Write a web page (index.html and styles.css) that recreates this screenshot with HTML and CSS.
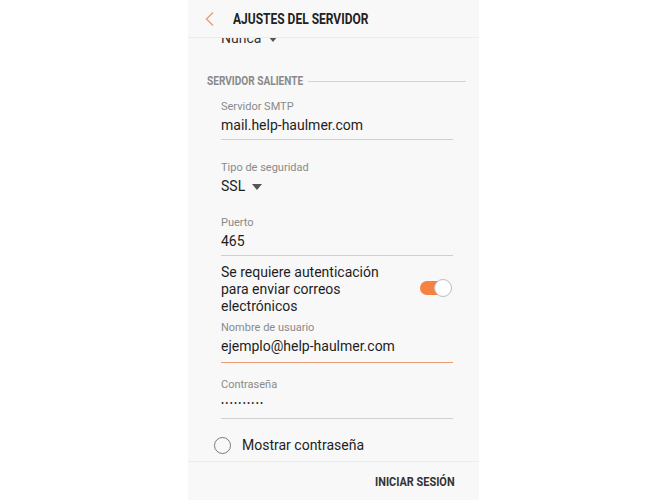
FILE: index.html
```html
<!DOCTYPE html>
<html lang="es">

<head>
  <meta charset="UTF-8" />
  <meta name="viewport" content="width=device-width, initial-scale=1" />
  <title>Ajustes del servidor</title>
  <link rel="stylesheet" href="styles.css">
</head>

<body>

  <div class="screen">
    <header class="topbar">
      <svg class="back" width="10" height="16" viewBox="0 0 10 16">
        <polyline points="8,1.5 1.5,8 8,14.5" fill="none" stroke="#e89c7c" stroke-width="1.4" />
      </svg>
      <span class="title narrow">AJUSTES DEL SERVIDOR</span>
    </header>

    <div class="content">
      <!-- fila anterior, cortada por el scroll -->
      <div class="dropdown cut">Nunca <span class="caret"></span></div>

      <div class="section">
        <span class="narrow">SERVIDOR SALIENTE</span>
        <span class="rule"></span>
      </div>

      <div class="field smtp">
        <div class="label">Servidor SMTP</div>
        <div class="value lined">mail.help-haulmer.com</div>
      </div>

      <div class="field seguridad">
        <div class="label">Tipo de seguridad</div>
        <div class="value">SSL <span class="caret"></span></div>
      </div>

      <div class="field puerto">
        <div class="label">Puerto</div>
        <div class="value lined">465</div>
      </div>

      <div class="auth">
        <span class="auth-text">Se requiere autenticación para enviar correos electrónicos</span>
        <span class="toggle"><span class="track"></span><span class="knob"></span></span>
      </div>

      <div class="field usuario">
        <div class="label">Nombre de usuario</div>
        <div class="value lined active">ejemplo@help-haulmer.com</div>
      </div>

      <div class="field clave">
        <div class="label">Contraseña</div>
        <div class="value lined dots">••••••••••</div>
      </div>

      <div class="check">
        <span class="radio"></span>
        <span>Mostrar contraseña</span>
      </div>
    </div>

    <footer class="bottombar">
      <span class="narrow">INICIAR SESIÓN</span>
    </footer>
  </div>

</body>

</html>
```

FILE: styles.css
```css
* {
  margin: 0;
  padding: 0;
  box-sizing: border-box;
}

html,
body {
  background: #fff;
  font-family: Roboto, 'Noto Sans', sans-serif;
  color: #1e1e1e;
}

.screen {
  width: 291px;
  height: 500px;
  margin: 0 auto;
  background: #f8f8f8;
  display: flex;
  flex-direction: column;
  overflow: hidden;
}

.narrow {
  display: inline-block;
  font-weight: 700;
  transform: scaleX(0.84);
  transform-origin: left center;
  white-space: nowrap;
}

/* barra superior */
.topbar {
  height: 38px;
  flex: none;
  display: flex;
  align-items: center;
  padding-left: 17px;
  border-bottom: 1px solid #ececec;
  background: #f8f8f8;
  position: relative;
  z-index: 1;
}

.back {
  margin-right: 18px;
}

.title {
  font-size: 15px;
  color: #222;
  transform: scaleX(0.8);
}

/* contenido */
.content {
  flex: 1;
  overflow: hidden;
  padding: 0 26px 0 33px;
}

.dropdown.cut {
  margin-top: -10px;
  font-size: 14px;
  line-height: 20px;
  color: #333;
}

.caret {
  display: inline-block;
  width: 0;
  height: 0;
  margin-left: 3px;
  vertical-align: middle;
  border-left: 5px solid transparent;
  border-right: 5px solid transparent;
  border-top: 6px solid #555;
}

.section {
  display: flex;
  align-items: center;
  margin: 25px -13px 0 -14px;
  height: 16px;
  font-size: 12px;
  color: #8a8a8a;
}

.section .narrow {
  width: 95px;
}

.rule {
  flex: 1;
  height: 1px;
  background: #d4d4d4;
  margin-left: 6px;
}

.label {
  font-size: 11px;
  line-height: 14px;
  color: #8a8a8a;
}

.value {
  margin-top: 1px;
  font-size: 14px;
  line-height: 20px;
  color: #1e1e1e;
}

.lined {
  padding-bottom: 4px;
  border-bottom: 1px solid #cfcfcf;
}

.lined.active {
  padding-bottom: 6px;
  border-bottom: 1px solid #eb9d78;
}

.dots {
  font-size: 9px;
  letter-spacing: 1.3px;
  padding-bottom: 5px;
}

.smtp {
  margin-top: 11px;
}

.seguridad {
  margin-top: 21px;
}

.puerto {
  margin-top: 20px;
}

.auth {
  margin-top: 8px;
  display: flex;
  align-items: center;
  justify-content: space-between;
  font-size: 14px;
  line-height: 17px;
}

.auth-text {
  max-width: 175px;
}

.toggle {
  position: relative;
  width: 32px;
  height: 18px;
  margin-right: 1px;
  margin-top: -3px;
}

.track {
  position: absolute;
  left: 0;
  top: 2px;
  width: 28px;
  height: 14px;
  border-radius: 7px;
  background: #f5823f;
}

.knob {
  position: absolute;
  right: 0;
  top: 0;
  width: 18px;
  height: 18px;
  border-radius: 50%;
  background: #fff;
  border: 1px solid #bdbdbd;
}

.usuario {
  margin-top: 6px;
}

.clave {
  margin-top: 15px;
}

.check {
  display: flex;
  align-items: center;
  height: 30px;
  margin: 11px 0 0 -7px;
  font-size: 14px;
  color: #1e1e1e;
}

.radio {
  width: 17px;
  height: 17px;
  border-radius: 50%;
  border: 1.5px solid #7a7a7a;
  margin-right: 11px;
}

/* barra inferior */
.bottombar {
  height: 39px;
  flex: none;
  border-top: 1px solid #ececec;
  display: flex;
  align-items: center;
  justify-content: flex-end;
  padding-right: 26px;
  font-size: 13px;
  color: #333;
}

.bottombar .narrow {
  width: 78px;
}
```
